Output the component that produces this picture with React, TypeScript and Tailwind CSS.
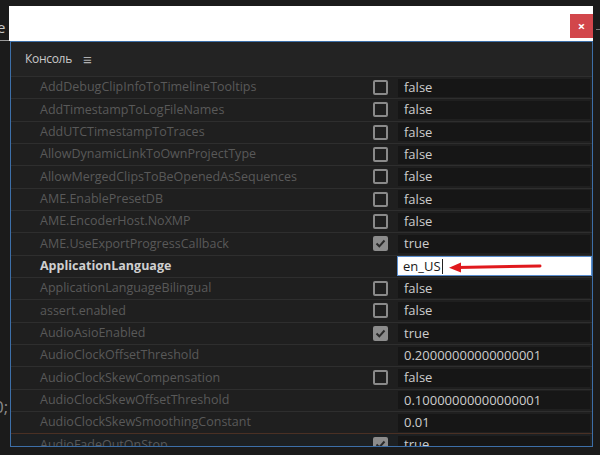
import React from "react";

type Row = {
  name: string;
  value: string;
  box?: "on" | "off";
  bold?: boolean;
};

const rows: Row[] = [
  { name: "AddDebugClipInfoToTimelineTooltips", value: "false", box: "off" },
  { name: "AddTimestampToLogFileNames", value: "false", box: "off" },
  { name: "AddUTCTimestampToTraces", value: "false", box: "off" },
  { name: "AllowDynamicLinkToOwnProjectType", value: "false", box: "off" },
  { name: "AllowMergedClipsToBeOpenedAsSequences", value: "false", box: "off" },
  { name: "AME.EnablePresetDB", value: "false", box: "off" },
  { name: "AME.EncoderHost.NoXMP", value: "false", box: "off" },
  { name: "AME.UseExportProgressCallback", value: "true", box: "on" },
  { name: "ApplicationLanguage", value: "en_US", bold: true },
  { name: "ApplicationLanguageBilingual", value: "false", box: "off" },
  { name: "assert.enabled", value: "false", box: "off" },
  { name: "AudioAsioEnabled", value: "true", box: "on" },
  { name: "AudioClockOffsetThreshold", value: "0.20000000000000001" },
  { name: "AudioClockSkewCompensation", value: "false", box: "off" },
  { name: "AudioClockSkewOffsetThreshold", value: "0.10000000000000001" },
  { name: "AudioClockSkewSmoothingConstant", value: "0.01" },
  { name: "AudioFadeOutOnStop", value: "true", box: "on" },
];

const Check = ({ on }: { on: boolean }) =>
  on ? (
    <div className="w-[15px] h-[15px] rounded-[2px] bg-[#8c8c8c] flex items-center justify-center">
      <svg width="11" height="11" viewBox="0 0 11 11">
        <path d="M1.5 5.5 L4.3 8.3 L9.5 2.5" stroke="#2a2a2a" strokeWidth="2" fill="none" />
      </svg>
    </div>
  ) : (
    <div className="w-[15px] h-[15px] rounded-[2px] border-2 border-[#8a8a8a]" />
  );

const App = () => {
  return (
    <div
      className="relative w-[600px] h-[455px] overflow-hidden bg-[#1b1b1b] pt-[6px] pl-[9px] pr-[7px]"
      style={{ fontFamily: '"Open Sans", "Noto Sans", sans-serif' }}
    >
      {/* app behind the dialog */}
      <div className="absolute left-[-3px] top-[20px] text-[15px] text-[#c8c8c8] leading-none">e</div>
      <div className="absolute left-0 top-[40px] w-[9px] h-[1px] bg-[#9a9a9a]" />
      <div className="absolute left-[-6px] top-[398px] text-[17px] text-[#8a8a8a] leading-none">0;</div>
      <div className="absolute right-0 top-[29px] w-[4px] h-[1px] bg-[#777]" />

      <div className="flex flex-col w-[584px]">
        <div className="h-[35px] bg-white flex items-start justify-end pt-[8px]">
          <div className="w-[23px] h-[24px] bg-[#d2464b] flex items-center justify-center text-white text-[13px] font-bold leading-none">
            ×
          </div>
        </div>

        <div className="w-[583px] ml-[1px] h-[406px] border border-[#3d6fa8] bg-[#232323] overflow-hidden flex flex-col">
          <div className="h-[34px] shrink-0 flex items-center pl-[14px] gap-[11px] text-[12px] tracking-[-0.3px] text-[#c9c9c9]">
            <span>Консоль</span>
            <span className="text-[15px] text-[#b0b0b0] leading-none">≡</span>
          </div>

          <div className="flex flex-col">
            {rows.map((r, i) => (
              <div
                key={i}
                className={`h-[22.33px] shrink-0 flex items-center border-t ${
                  i === rows.length - 1 ? "border-[#4a3024] bg-[#1d2022]" : "border-[#2e2e2e] bg-[#1f1f1f]"
                }`}
              >
                <div
                  className={`w-[362px] pl-[29px] text-[12.5px] whitespace-nowrap ${
                    r.bold ? "font-bold text-[#cfcfcf]" : "text-[#595959]"
                  }`}
                >
                  {r.name}
                </div>
                <div className="w-[25px] flex justify-start">
                  {r.box ? <Check on={r.box === "on"} /> : null}
                </div>
                {r.bold ? (
                  <div className="relative w-[195px] h-[20px] ml-[-1px] bg-white border border-[#5b8fd0] flex items-center pl-[5px] text-[13px] text-[#1a1a1a]">
                    <span>en_US</span>
                    <span className="w-[1px] h-[15px] bg-[#222] ml-[1px]" />
                    <svg className="absolute left-[49px] top-[3px]" width="100" height="14" viewBox="0 0 100 14">
                      <path d="M10 7.5 L93 6" stroke="#e0191d" strokeWidth="3" strokeLinecap="round" />
                      <path d="M2 7.8 L14 2.5 L14 12.5 Z" fill="#e0191d" />
                    </svg>
                  </div>
                ) : (
                  <div className="w-[192px] h-[18px] bg-[#161616] flex items-center pl-[6px] text-[13px] text-[#cdcdcd]">
                    {r.value}
                  </div>
                )}
              </div>
            ))}
          </div>
        </div>
      </div>
    </div>
  );
};

export default App;
